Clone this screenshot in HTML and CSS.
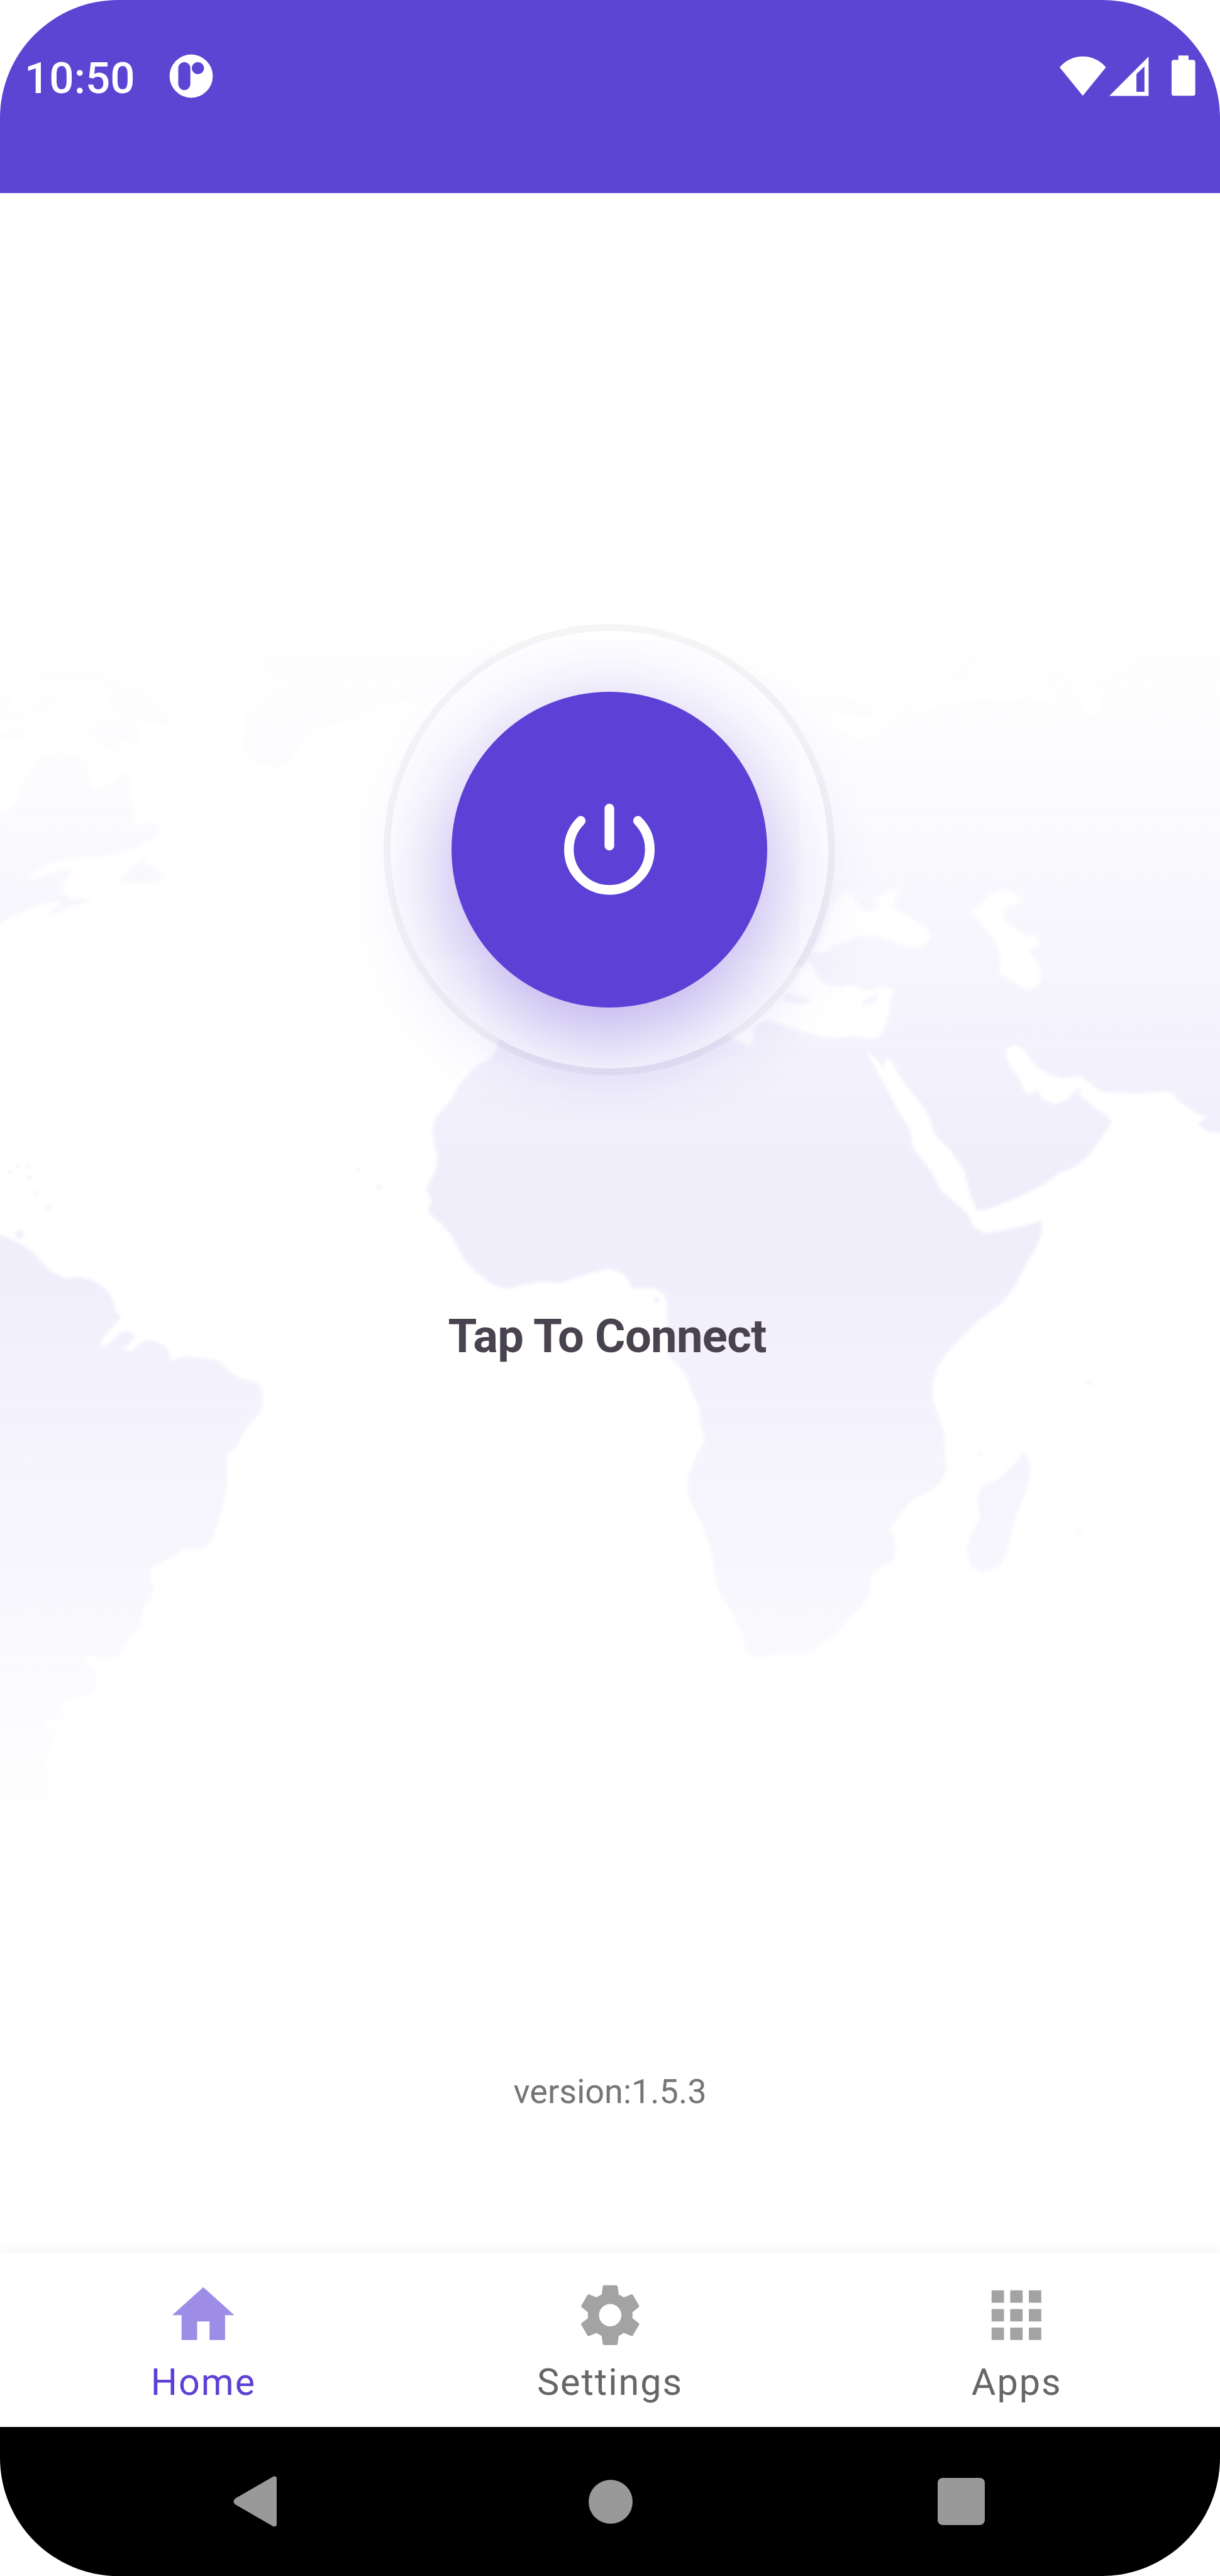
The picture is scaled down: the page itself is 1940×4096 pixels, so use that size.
FILE: index.html
```html
<!DOCTYPE html>
<html lang="en">
<head>
<meta charset="utf-8">
<title>VPN</title>
<link rel="stylesheet" href="styles.css">
</head>
<body>
<div class="phone">
  <header class="status">
    <div class="status-row">
      <span class="clock">10:50</span>
      <svg class="status-logo" viewBox="0 0 80 80">
        <path fill="#fff" fill-rule="evenodd" d="M40 1.8a38.2 38.2 0 1 1 0 76.4a38.2 38.2 0 1 1 0-76.4zM27.9 15.3a10.7 10.7 0 0 0-10.7 10.7V54a10.7 10.7 0 0 0 21.4 0V26a10.7 10.7 0 0 0-10.7-10.7zM51.9 15.2a10.8 10.8 0 1 0 0 21.6a10.8 10.8 0 1 0 0-21.6z"/>
      </svg>
      <span class="spacer"></span>
      <svg class="status-wifi" viewBox="0 0 82 80"><path fill="#fff" d="M41 74.8L0 24.4C11 12 25 5.3 41 5.3S71 12 82 24.4z"/></svg>
      <svg class="status-signal" viewBox="0 0 70 80"><path fill="#fff" fill-rule="evenodd" d="M0 75L69.5 5.5V75zM48 36.5V68H62.2V23z"/></svg>
      <svg class="status-battery" viewBox="0 0 42 80"><path fill="#fff" d="M12 3.5H30V11.3H38a4 4 0 0 1 4 4V71a4 4 0 0 1-4 4H4a4 4 0 0 1-4-4V15.3a4 4 0 0 1 4-4H12z"/></svg>
    </div>
  </header>

  <main class="content">
    <svg class="map" viewBox="0 342 2160 3646" preserveAspectRatio="none">
      <defs>
        <linearGradient id="fade" gradientUnits="userSpaceOnUse" x1="0" y1="1050" x2="0" y2="3250">
          <stop offset="0" stop-color="#5d40d5" stop-opacity="0"/>
          <stop offset=".11" stop-color="#5d40d5" stop-opacity=".013"/>
          <stop offset=".21" stop-color="#5d40d5" stop-opacity=".033"/>
          <stop offset=".32" stop-color="#5d40d5" stop-opacity=".059"/>
          <stop offset=".48" stop-color="#5d40d5" stop-opacity=".092"/>
          <stop offset=".55" stop-color="#5d40d5" stop-opacity=".087"/>
          <stop offset=".66" stop-color="#5d40d5" stop-opacity=".066"/>
          <stop offset=".77" stop-color="#5d40d5" stop-opacity=".048"/>
          <stop offset=".87" stop-color="#5d40d5" stop-opacity=".026"/>
          <stop offset="1" stop-color="#5d40d5" stop-opacity="0"/>
        </linearGradient>
        <filter id="soften" filterUnits="userSpaceOnUse" x="-50" y="900" width="2260" height="2500"><feGaussianBlur stdDeviation="3"/></filter>
        <mask id="land" maskUnits="userSpaceOnUse" x="0" y="900" width="2160" height="2500">
          <g filter="url(#soften)" fill="#fff">
            <!-- North America and Greenland -->
            <g transform="translate(0 1050) scale(.45918 .44643)">
              <path d="M-40 890L0 875L30 862L60 838L78 805L85 745L110 720L130 700L150 662L165 650L190 637L220 633L260 635L290 645L322 662L345 690L336 715L340 740L355 768L375 785L410 765L440 745L470 722L490 712L500 745L500 800L505 840L528 885L500 922L530 918L560 911L600 915L611 930L610 945L595 968L560 990L500 1020L420 1042L330 1045L240 1055L195 1072L150 1095L110 1120L120 1142L160 1122L200 1105L240 1095L285 1092L262 1130L240 1160L245 1185L270 1210L320 1215L360 1212L310 1235L260 1250L215 1270L175 1285L195 1262L240 1235L215 1222L140 1240L60 1275L20 1300L0 1320L-40 1340z"/>
              <path d="M570 1035L520 1075L490 1110L450 1137L485 1145L530 1150L590 1148L630 1137L620 1110L590 1090L560 1075L555 1060z"/>
              <path d="M115 350L150 315L200 290L260 300L330 290L400 310L470 340L520 365L580 385L600 440L640 470L655 495L645 520L620 525L570 512L530 515L540 580L520 600L480 585L450 590L485 635L430 625L390 605L365 575L340 548L290 542L235 555L255 535L340 540L370 510L420 500L485 495L450 465L430 440L410 390L360 365L300 378L250 370L150 368z"/>
              <path d="M90 470L130 430L180 403L230 408L195 445L150 475z"/>
              <path d="M-40 405L50 410L40 460L110 492L50 500L-40 520z"/>
              <path d="M-40 570L60 538L90 550L120 585L70 572L-40 580z"/>
              <path d="M0 292L40 268L120 275L60 290zM180 210L260 195L430 225L330 240zM430 170L530 120L700 90L560 160L490 190z"/>
              <path d="M740 150L860 165L950 185L980 240L1010 290L1040 330L1050 370L1040 405L990 440L950 475L937 505L945 550L933 590L945 625L975 660L1010 682L1060 693L1095 685L1125 655L1150 610L1180 570L1215 540L1250 525L1330 510L1400 480L1460 445L1568 425L1750 390L1900 360L1900 60L1100 40L740 110z"/>
            </g>
            <!-- Europe and Asia -->
            <g transform="translate(1400 1050) scale(.48468 .73341)">
              <path d="M-700 260L-400 200L-100 200L0 215L60 240L120 252L230 255L320 285L300 300L120 292L180 330L250 357L310 340L335 318L400 297L415 268L450 290L490 285L560 265L640 262L700 255L780 262L860 255L980 265L920 225L920 205L960 187L1010 195L1050 225L1060 260L1085 300L1130 290L1140 265L1115 240L1080 210L1140 205L1200 180L1300 150L1440 130L1640 120L1640 1305L1568 1302L1530 1302L1485 1283L1520 1265L1480 1255L1415 1225L1400 1210L1370 1203L1250 1208L1130 1203L1095 1185L1060 1165L1000 1172L940 1160L890 1140L865 1115L845 1098L815 1092L790 1100L785 1115L800 1138L835 1172L850 1198L870 1211L900 1197L920 1222L965 1235L1010 1222L1055 1192L1060 1215L1110 1242L1150 1258L1175 1277L1130 1318L1090 1358L1040 1385L980 1400L930 1425L860 1450L780 1472L720 1488L680 1490L655 1450L635 1395L590 1350L530 1310L505 1265L490 1245L430 1195L390 1160L370 1130L352 1122L340 1145L285 1108L285 990L-700 990z"/>
              <path d="M580 212L610 175L640 158L720 135L860 128L720 145L655 180L665 220z"/>
            </g>
            <!-- Africa -->
            <g transform="translate(700 1800) scale(.79719 .76531)">
              <path d="M230 55L222 82L205 100L180 112L165 130L140 162L120 198L88 235L82 262L86 295L94 320L90 355L68 398L80 425L72 448L86 465L105 482L130 515L150 558L175 588L210 615L235 627L258 628L285 620L330 613L370 616L400 605L440 592L475 582L505 594L520 612L524 628L575 628L597 642L604 670L605 785L630 808L647 832L657 868L675 903L678 950L688 978L678 1002L664 1022L650 1065L648 1095L660 1132L682 1175L695 1215L706 1262L712 1310L728 1348L748 1375L758 1402L773 1432L776 1462L787 1480L810 1484L840 1476L905 1476L945 1455L975 1430L1005 1395L1053 1342L1055 1300L1068 1280L1105 1260L1112 1232L1108 1205L1098 1185L1120 1152L1145 1120L1195 1092L1215 1070L1225 1040L1220 1010L1219 960L1205 920L1193 885L1193 850L1205 808L1225 778L1260 740L1295 702L1350 660L1375 625L1400 575L1422 535L1435 505L1435 472L1380 488L1310 501L1285 487L1270 455L1235 422L1210 400L1190 358L1150 305L1143 262L1120 222L1090 165L1050 88L1050 -40L230 -40z"/>
              <path d="M1395 1002L1411 1042L1402 1095L1388 1130L1375 1165L1358 1240L1340 1274L1305 1285L1278 1275L1268 1235L1276 1205L1298 1160L1293 1110L1305 1085L1340 1070L1370 1040L1388 1020z"/>
              <circle cx="1540" cy="847" r="5"/><circle cx="1297" cy="1012" r="5"/><circle cx="1520" cy="1192" r="5"/><circle cx="580" cy="655" r="6"/>
            </g>
            <!-- South America -->
            <g transform="translate(0 2050) scale(.45918 .79719)">
              <path d="M-40 170L0 172L50 182L90 195L130 210L160 230L200 253L260 268L310 264L355 271L400 287L430 308L445 335L465 355L440 372L400 395L385 415L402 420L440 402L465 386L490 383L522 395L500 412L468 424L510 430L535 414L565 405L600 406L635 418L654 432L655 452L700 441L770 443L840 450L865 464L900 482L940 491L985 497L1008 512L1015 535L1005 562L970 588L945 605L910 642L875 660L876 700L872 740L860 772L840 812L815 850L790 867L710 868L660 888L600 905L577 918L582 940L593 958L580 978L555 995L550 1015L535 1042L500 1068L460 1103L430 1114L380 1110L310 1103L345 1125L370 1147L375 1168L355 1188L300 1198L240 1203L245 1245L210 1250L165 1243L180 1265L210 1280L195 1310L165 1340L180 1360L212 1385L192 1460L120 1475L40 1440L-40 1430z"/>
              <ellipse cx="70" cy="17" rx="8" ry="3.500"/><ellipse cx="40" cy="30" rx="8" ry="3"/><ellipse cx="108" cy="17" rx="8" ry="3.500"/><ellipse cx="112" cy="43" rx="10" ry="3.500"/><ellipse cx="138" cy="78" rx="10" ry="3"/><ellipse cx="188" cy="110" rx="10" ry="4"/><ellipse cx="75" cy="170" rx="16" ry="9"/><ellipse cx="1380" cy="25" rx="8" ry="3"/><ellipse cx="1463" cy="65" rx="9" ry="5"/>
            </g>
            <!-- Mediterranean, Black and Caspian seas -->
            <g transform="translate(1400 1050) scale(.48468 .73341)">
              <path fill="#000" d="M-227 1075L-153 1094L-130 1080L-128 1049L-87 1033L0 1052L60 1065L120 1074L180 1077L235 1072L290 1079L325 1075L345 1055L362 1020L368 985L380 958L345 945L310 952L280 957L250 950L215 942L180 948L140 944L105 930L88 905L68 885L40 900L-227 900z"/>
              <path fill="#000" d="M75 862L105 838L120 800L150 750L180 728L205 718L248 742L255 760L290 765L325 758L295 737L345 722L405 703L392 730L378 757L420 775L490 800L518 828L500 848L460 858L420 855L370 842L310 830L240 832L200 845L160 852L130 870L95 873z"/>
              <path fill="#000" d="M655 770L690 748L730 722L780 712L820 722L858 750L800 755L778 775L795 795L830 810L862 826L895 822L916 850L875 865L905 890L920 915L916 940L895 955L868 960L830 948L790 932L758 922L760 870L740 838L700 805z"/>
              <path d="M262 988L318 970L305 985L275 993zM-20 968L40 977L72 983L40 989L-20 983z"/>
            </g>
          </g>
        </mask>
      </defs>
      <rect x="0" y="1050" width="2160" height="2200" fill="url(#fade)" mask="url(#land)"/>
    </svg>

    <div class="ring">
      <div class="power">
        <svg class="power-icon" viewBox="-90 -90 180 180" fill="none" stroke="#fff" stroke-width="17" stroke-linecap="round">
          <path d="M-50.5 -51A71.5 71.5 0 1 0 50.5 -51M0 -72.5V-7"/>
        </svg>
      </div>
    </div>
    <div class="tap">Tap To Connect</div>
    <div class="version">version:1.5.3</div>
  </main>

  <nav class="tabs">
    <div class="tab tab-active">
      <svg class="tab-icon" viewBox="0 0 24 24"><path d="M10 20v-6h4v6h5v-8h3L12 3 2 12h3v8z"/></svg>
      <span class="tab-label">Home</span>
    </div>
    <div class="tab">
      <svg class="tab-icon" viewBox="0 0 24 24"><path d="M19.14 12.94c.04-.3.06-.61.06-.94 0-.32-.02-.64-.07-.94l2.03-1.58c.18-.14.23-.41.12-.61l-1.92-3.32c-.12-.22-.37-.29-.59-.22l-2.39.96c-.5-.38-1.03-.7-1.62-.94l-.36-2.54c-.04-.24-.24-.41-.48-.41h-3.84c-.24 0-.43.17-.47.41l-.36 2.54c-.59.24-1.13.57-1.62.94l-2.39-.96c-.22-.08-.47 0-.59.22L2.74 8.87c-.12.21-.08.47.12.61l2.03 1.58c-.05.3-.09.63-.09.94s.02.64.07.94l-2.03 1.58c-.18.14-.23.41-.12.61l1.92 3.32c.12.22.37.29.59.22l2.39-.96c.5.38 1.03.7 1.62.94l.36 2.54c.05.24.24.41.48.41h3.84c.24 0 .44-.17.47-.41l.36-2.54c.59-.24 1.13-.56 1.62-.94l2.39.96c.22.08.47 0 .59-.22l1.92-3.32c.12-.22.07-.47-.12-.61l-2.01-1.58zM12 15.6c-1.98 0-3.6-1.62-3.6-3.6s1.62-3.6 3.6-3.6 3.6 1.62 3.6 3.6-1.62 3.6-3.6 3.6z"/></svg>
      <span class="tab-label">Settings</span>
    </div>
    <div class="tab">
      <svg class="tab-icon" viewBox="0 0 24 24"><path d="M4 8h4V4H4v4zm6 12h4v-4h-4v4zm-6 0h4v-4H4v4zm0-6h4v-4H4v4zm6 0h4v-4h-4v4zm6-10v4h4V4h-4zm-6 4h4V4h-4v4zm6 6h4v-4h-4v4zm0 6h4v-4h-4v4z"/></svg>
      <span class="tab-label">Apps</span>
    </div>
  </nav>

  <footer class="system">
    <svg class="sys-back" viewBox="0 0 77 90"><path fill="#999" d="M3 40L70 1.200Q77-1.500 77 5V85Q77 91.500 70 88.800L3 50Q-2 45 3 40z"/></svg>
    <span class="sys-home"></span>
    <span class="sys-recent"></span>
  </footer>
</div>
</body>
</html>
```
FILE: styles.css
```css
* { box-sizing: border-box; }
body { margin: 0; background: #fff; font-family: Roboto, sans-serif; }
svg { display: block; flex: none; }

.phone {
  width: 1940px;
  height: 4096px;
  display: flex;
  flex-direction: column;
  background: #fff;
  border-radius: 188px;
  overflow: hidden;
}

.status { height: 307px; background: #5c45d3; }
.status-row {
  height: 242px;
  padding: 0 39.5px 0 39px;
  display: flex;
  align-items: center;
}
.clock {
  width: 231px;
  padding-top: 8px;
  font-size: 69.2px;
  line-height: 84px;
  font-weight: 500;
  color: #fff;
  white-space: nowrap;
}
.status-logo { width: 72px; height: 72px; margin-left: -2px; }
.spacer { flex: 1; }
.status-wifi { width: 73.6px; height: 71.9px; }
.status-signal { width: 62.9px; height: 71.9px; margin-left: 5.6px; }
.status-battery { width: 37.7px; height: 71.9px; margin-left: 35.5px; }

.content {
  position: relative;
  height: 3275px;
  padding: 685px 0 224px;
  display: flex;
  flex-direction: column;
  align-items: center;
}
/* backdrop that lies under the content */
.map { position: absolute; left: 0; top: 0; width: 100%; height: 100%; }
.ring {
  position: relative;
  width: 718px;
  height: 718px;
  margin-right: 2px;
  display: flex;
  align-items: center;
  justify-content: center;
  border: 11px solid rgba(40, 30, 50, .045);
  border-radius: 50%;
  background: #fff;
  background-clip: padding-box;
}
.power {
  width: 502px;
  height: 502px;
  display: flex;
  align-items: center;
  justify-content: center;
  border-radius: 50%;
  background: #5d40d5;
  box-shadow: 0 43px 153px rgba(93, 64, 213, .47);
}
.power-icon { width: 162px; height: 162px; }
.tap {
  position: relative;
  margin: 371px 9px 0 0;
  font-size: 74.1px;
  line-height: 88px;
  font-weight: 700;
  letter-spacing: -.65px;
  color: #49434f;
}
.version {
  position: relative;
  margin-top: auto;
  font-size: 54px;
  line-height: 64px;
  color: #757575;
}

.tabs {
  position: relative;
  height: 277px;
  display: flex;
  background: #fff;
  box-shadow: 0 0 26px rgba(0, 0, 0, .065);
}
.tab {
  flex: 1;
  padding-top: 39.5px;
  display: flex;
  flex-direction: column;
  align-items: center;
  gap: 13px;
  color: #666;
}
.tab-icon { width: 118.6px; height: 118.6px; fill: #a3a3a3; }
.tab-label { font-size: 59.3px; line-height: 70px; letter-spacing: .033em; }
.tab-active { color: #5d40d5; }
.tab-active .tab-icon { fill: #9d8de7; }

.system {
  position: relative;
  height: 237px;
  padding: 0 374px 0 371px;
  display: flex;
  align-items: center;
  justify-content: space-between;
  background: #000;
}
.sys-back { width: 69px; height: 81px; }
.sys-home { width: 70px; height: 70px; margin-left: 10.5px; border-radius: 50%; background: #999; }
.sys-recent { width: 75px; height: 75px; border-radius: 8px; background: #999; }
```
